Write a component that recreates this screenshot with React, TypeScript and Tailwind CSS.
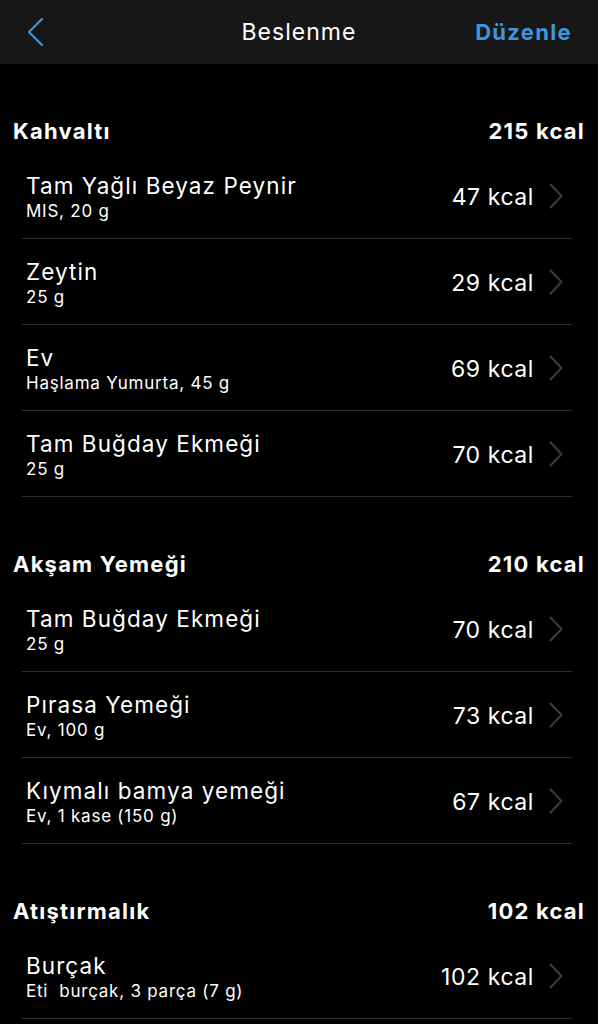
import React from "react";

type Item = { name: string; sub: string; kcal: string };
type Section = { title: string; total: string; items: Item[] };

const sections: Section[] = [
  {
    title: "Kahvaltı",
    total: "215 kcal",
    items: [
      { name: "Tam Yağlı Beyaz Peynir", sub: "MIS, 20 g", kcal: "47 kcal" },
      { name: "Zeytin", sub: "25 g", kcal: "29 kcal" },
      { name: "Ev", sub: "Haşlama Yumurta, 45 g", kcal: "69 kcal" },
      { name: "Tam Buğday Ekmeği", sub: "25 g", kcal: "70 kcal" },
    ],
  },
  {
    title: "Akşam Yemeği",
    total: "210 kcal",
    items: [
      { name: "Tam Buğday Ekmeği", sub: "25 g", kcal: "70 kcal" },
      { name: "Pırasa Yemeği", sub: "Ev, 100 g", kcal: "73 kcal" },
      { name: "Kıymalı bamya yemeği", sub: "Ev, 1 kase (150 g)", kcal: "67 kcal" },
    ],
  },
  {
    title: "Atıştırmalık",
    total: "102 kcal",
    items: [
      { name: "Burçak", sub: "Eti\u00a0 burçak, 3 parça (7 g)", kcal: "102 kcal" },
    ],
  },
];

function Chevron() {
  return (
    <svg width="16" height="26" viewBox="0 0 16 26" fill="none" className="shrink-0">
      <path d="M2.5 1.5L13.5 13L2.5 24.5" stroke="#3b3b3d" strokeWidth="2" strokeLinecap="round" strokeLinejoin="round" />
    </svg>
  );
}

export default function App() {
  return (
    <div
      className="w-[598px] h-[1024px] overflow-hidden bg-black text-white"
      style={{ fontFamily: "Inter, 'Open Sans', sans-serif" }}
    >
      <header className="h-[64px] bg-[#171717] flex items-center justify-between pl-[27px] pr-[26px] relative">
        <svg width="18" height="30" viewBox="0 0 18 30" fill="none">
          <path d="M15 2L2 15L15 28" stroke="#3c97dc" strokeWidth="2.2" strokeLinecap="round" strokeLinejoin="round" />
        </svg>
        <div className="absolute left-0 right-0 text-center text-[23px] tracking-[0.045em] leading-none text-white pointer-events-none">
          Beslenme
        </div>
        <button className="text-[22px] font-bold tracking-[0.06em] text-[#3d97dd] leading-none">Düzenle</button>
      </header>
      <main className="flex flex-col">
        {sections.map((s) => (
          <section key={s.title} className="mt-[45px] flex flex-col">
            <div className="h-[44px] flex items-center justify-between pl-[13px] pr-[14px]">
              <span className="text-[22px] font-bold tracking-[0.055em]">{s.title}</span>
              <span className="text-[22px] font-bold tracking-[0.055em] -mr-[1px]">{s.total}</span>
            </div>
            {s.items.map((it, i) => (
              <div key={i} className="h-[86px] ml-[22px] mr-[26px] border-b border-[#2e2e2e] flex items-center justify-between">
                <div className="flex flex-col pl-[4px] pt-[1px]">
                  <span className="text-[22.5px] tracking-[0.048em] leading-[29px]">{it.name}</span>
                  <span className="text-[17px] tracking-[0.045em] leading-[22px]">{it.sub}</span>
                </div>
                <div className="flex items-center gap-[14px] pr-[8px]">
                  <span className="text-[23px] tracking-[0.025em] pt-[3px]">{it.kcal}</span>
                  <Chevron />
                </div>
              </div>
            ))}
          </section>
        ))}
      </main>
    </div>
  );
}
